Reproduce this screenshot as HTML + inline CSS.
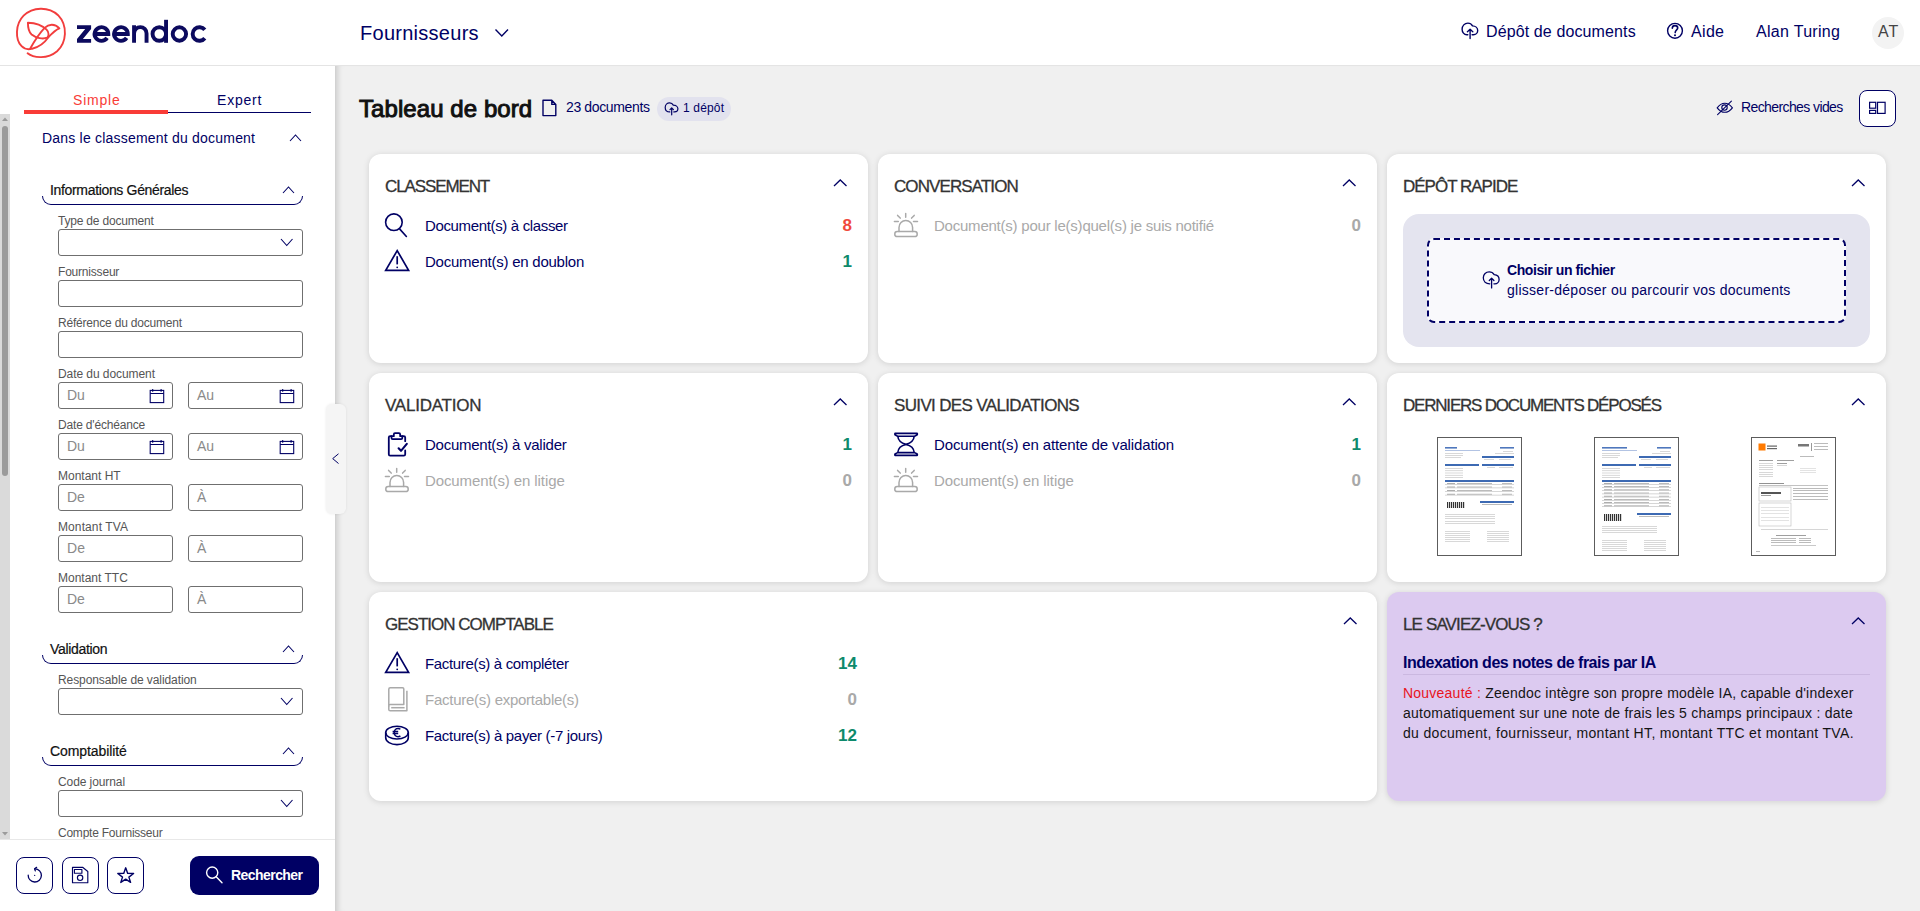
<!DOCTYPE html>
<html><head><meta charset="utf-8"><title>Zeendoc - Tableau de bord</title>
<style>
html,body{margin:0;padding:0;width:1920px;height:911px;overflow:hidden;background:#fff;}
body{position:relative;font-family:"Liberation Sans",sans-serif;}
.t{position:absolute;white-space:nowrap;}
svg{overflow:visible;}
</style></head><body>
<div style="position:absolute;left:0px;top:0px;width:1920px;height:65px;background:#fff;"></div>
<div style="position:absolute;left:0px;top:65px;width:1920px;height:1px;background:#e4e4e4;"></div>
<svg style="position:absolute;left:0px;top:0px;" width="80" height="80" viewBox="0 0 80 80" fill="none"><g transform="translate(0.6,0.7)" stroke="#f23d3d" stroke-width="1.9" stroke-linecap="round" stroke-linejoin="round">
<path d="M27,52.6 C33,57.6 47,58.6 56.5,50.5 C66,42 67.5,25 57.5,14.5 C48,5.5 32,6 23,15 C14.5,23.5 14.5,39 21,45.5 C24,48.5 28,49 31.5,48 C38,46.5 44,42 47.8,36.5"/>
<path d="M29.8,47.6 C33.5,41 38.5,33 44,27.2 C48,23.4 54,22.6 58.8,27.6 C55,29 51.5,32.5 47.8,36.5"/>
<path d="M27.3,22 C33.5,22.2 41.5,24.5 46,29 C48.5,31.5 48.5,35.5 46.5,37 C42.5,38.6 35.5,37.5 31,33.8 C28,31 27.3,26 27.3,22 Z"/>
</g></svg>
<svg style="position:absolute;left:70px;top:10px;" width="150" height="45" viewBox="0 0 150 45" fill="none"><g fill="#0c0a5e"><path d="M7,15.2 H21.1 V19.1 L12.9,28.9 H21.1 V32.8 H7 V28.9 L15.2,19.1 H7 Z"/></g>
<g stroke="#0c0a5e" stroke-width="3.9" fill="none">
<path d="M24.6,24 H38.3 A6.85,6.85 0 1 0 37.1,27.9"/>
<path d="M44.1,24 H57.8 A6.85,6.85 0 1 0 56.6,27.9"/>
<path d="M64.05,32.8 V15.2 M64.05,23.4 A6.25,6.25 0 0 1 76.55,23.4 V32.8"/>
<circle cx="89.3" cy="24" r="6.75"/><path d="M96.05,9.8 V32.8"/>
<circle cx="109.4" cy="24" r="6.7"/>
<path d="M134.8,19.8 A6.8,6.8 0 1 0 134.8,28.2"/>
</g></svg>
<div class="t" id="t1" style="left:360px;top:23px;font-size:20px;line-height:20px;color:#000064;font-weight:400;letter-spacing:0.273px;">Fournisseurs</div>
<svg style="position:absolute;left:490px;top:25px;" width="24" height="16" viewBox="0 0 24 16" fill="none"><path d="M5.5,4.5 L11.8,11 L18,4.5" stroke="#000064" stroke-width="1.4"/></svg>
<svg style="position:absolute;left:1455px;top:15px;" width="30" height="30" viewBox="0 0 30 30" fill="none"><g stroke="#000064" stroke-width="1.4" stroke-linecap="round" stroke-linejoin="round">
<path d="M12.8,19.7 H11.8 C9.1,19.7 7.1,17.2 7.1,14.2 C7.1,10.8 9.6,8.1 12.9,8.1 C15,8.1 16.6,9.2 17.5,10.9 C20.4,11 22.7,13 22.7,15.5 C22.7,17.9 20.8,19.7 18.4,19.7 H17.1"/>
<path d="M15.1,23.5 V14.8 M12.4,16.7 L15.1,14.2 L17.8,16.7"/></g></svg>
<div class="t" id="t2" style="left:1486px;top:24px;font-size:16px;line-height:16px;color:#000064;font-weight:400;letter-spacing:0.118px;">Dépôt de documents</div>
<svg style="position:absolute;left:1660px;top:15px;" width="30" height="30" viewBox="0 0 30 30" fill="none"><circle cx="15" cy="15.8" r="7.4" stroke="#000064" stroke-width="1.4"/>
<path d="M12.3,13.2 C12.3,11.4 13.6,10.6 15,10.6 C16.5,10.6 17.7,11.6 17.7,13 C17.7,14.8 15.2,15 15.2,17.6" stroke="#000064" stroke-width="1.6" stroke-linecap="round"/>
<circle cx="15" cy="20.2" r="1" fill="#000064"/></svg>
<div class="t" id="t3" style="left:1691px;top:24px;font-size:16px;line-height:16px;color:#000064;font-weight:400;letter-spacing:0.333px;">Aide</div>
<div class="t" id="t4" style="left:1756px;top:24px;font-size:16px;line-height:16px;color:#000064;font-weight:400;letter-spacing:0.300px;">Alan Turing</div>
<div style="position:absolute;left:1872px;top:17px;width:32px;height:32px;background:#f3f3f3;border-radius:50%;"></div>
<div class="t" id="t5" style="left:1878px;top:24px;font-size:16px;line-height:16px;color:#444;font-weight:400;letter-spacing:1.000px;">AT</div>
<div style="position:absolute;left:0px;top:66px;width:335px;height:845px;background:#fff;"></div>
<div style="position:absolute;left:24px;top:110px;width:144px;height:4px;background:#f93c37;"></div>
<div style="position:absolute;left:168px;top:112px;width:143px;height:1px;background:#000064;"></div>
<div class="t" id="t6" style="left:73px;top:93px;font-size:14px;line-height:14px;color:#f93c37;font-weight:400;letter-spacing:0.800px;">Simple</div>
<div class="t" id="t7" style="left:217px;top:93px;font-size:14px;line-height:14px;color:#000064;font-weight:400;letter-spacing:0.800px;">Expert</div>
<div style="position:absolute;left:0px;top:114px;width:10px;height:725px;background:#dadada;"></div>
<div style="position:absolute;left:2px;top:126px;width:6px;height:350px;background:#9b9b9b;border-radius:3px;"></div>
<svg style="position:absolute;left:0px;top:114px;" width="10" height="10" viewBox="0 0 10 10" fill="none"><path d="M2,7 L5,3.5 L8,7 Z" fill="#9b9b9b"/></svg>
<svg style="position:absolute;left:0px;top:829px;" width="10" height="10" viewBox="0 0 10 10" fill="none"><path d="M2,3 L5,6.5 L8,3 Z" fill="#9b9b9b"/></svg>
<div class="t" id="t8" style="left:42px;top:131px;font-size:14px;line-height:14px;color:#000064;font-weight:400;letter-spacing:0.207px;">Dans le classement du document</div>
<svg style="position:absolute;left:289px;top:132.6px;" width="13" height="10" viewBox="0 0 13 10" fill="none"><path d="M1,8 L6.5,2 L12,8" stroke="#000064" stroke-width="1.1"/></svg>
<div style="position:absolute;left:42px;top:184px;width:259px;height:20px;border:1px solid #000064;border-top:none;border-bottom-left-radius:9px;border-bottom-right-radius:9px;"></div>
<div style="position:absolute;left:40px;top:183px;width:264px;height:13px;background:#fff;"></div>
<div class="t" id="t9" style="left:50px;top:183px;font-size:14px;line-height:14px;color:#111;font-weight:400;letter-spacing:-0.333px;-webkit-text-stroke:0.2px #111;">Informations Générales</div>
<svg style="position:absolute;left:282px;top:185px;" width="13" height="10" viewBox="0 0 13 10" fill="none"><path d="M1,8 L6.5,2 L12,8" stroke="#000064" stroke-width="1.1"/></svg>
<div class="t" id="t10" style="left:58px;top:215px;font-size:12px;line-height:12px;color:#555;font-weight:400;letter-spacing:-0.200px;">Type de document</div>
<div style="position:absolute;left:58px;top:229px;width:243px;height:25px;border:1px solid #6f6f6f;border-radius:3px;background:#fff;"></div>
<svg style="position:absolute;left:280px;top:236.7px;" width="13.5" height="10.5" viewBox="0 0 13.5 10.5" fill="none"><path d="M1,2 L6.75,8.5 L12.5,2" stroke="#000064" stroke-width="1.1"/></svg>
<div class="t" id="t11" style="left:58px;top:266px;font-size:12px;line-height:12px;color:#555;font-weight:400;letter-spacing:-0.200px;">Fournisseur</div>
<div style="position:absolute;left:58px;top:280px;width:243px;height:25px;border:1px solid #6f6f6f;border-radius:3px;background:#fff;"></div>
<div class="t" id="t12" style="left:58px;top:317px;font-size:12px;line-height:12px;color:#555;font-weight:400;letter-spacing:-0.200px;">Référence du document</div>
<div style="position:absolute;left:58px;top:331px;width:243px;height:25px;border:1px solid #6f6f6f;border-radius:3px;background:#fff;"></div>
<div class="t" id="t13" style="left:58px;top:368px;font-size:12px;line-height:12px;color:#555;font-weight:400;letter-spacing:-0.067px;">Date du document</div>
<div style="position:absolute;left:58px;top:382px;width:113px;height:25px;border:1px solid #6f6f6f;border-radius:3px;background:#fff;"></div>
<div style="position:absolute;left:188px;top:382px;width:113px;height:25px;border:1px solid #6f6f6f;border-radius:3px;background:#fff;"></div>
<svg style="position:absolute;left:149px;top:388px;" width="16" height="16" viewBox="0 0 16 16" fill="none"><g stroke="#000064" stroke-width="1.1"><rect x="1.2" y="2.4" width="13.5" height="12.2"/><path d="M1.2,5.5 H14.7 M3.7,1 V3.8 M12.1,1 V3.8"/></g></svg>
<svg style="position:absolute;left:279px;top:388px;" width="16" height="16" viewBox="0 0 16 16" fill="none"><g stroke="#000064" stroke-width="1.1"><rect x="1.2" y="2.4" width="13.5" height="12.2"/><path d="M1.2,5.5 H14.7 M3.7,1 V3.8 M12.1,1 V3.8"/></g></svg>
<div class="t" id="t14" style="left:67px;top:388px;font-size:14px;line-height:14px;color:#8a8a8a;font-weight:400;letter-spacing:-0.067px;">Du</div>
<div class="t" id="t15" style="left:197px;top:388px;font-size:14px;line-height:14px;color:#8a8a8a;font-weight:400;">Au</div>
<div class="t" id="t16" style="left:58px;top:419px;font-size:12px;line-height:12px;color:#555;font-weight:400;letter-spacing:-0.179px;">Date d'échéance</div>
<div style="position:absolute;left:58px;top:433px;width:113px;height:25px;border:1px solid #6f6f6f;border-radius:3px;background:#fff;"></div>
<div style="position:absolute;left:188px;top:433px;width:113px;height:25px;border:1px solid #6f6f6f;border-radius:3px;background:#fff;"></div>
<svg style="position:absolute;left:149px;top:439px;" width="16" height="16" viewBox="0 0 16 16" fill="none"><g stroke="#000064" stroke-width="1.1"><rect x="1.2" y="2.4" width="13.5" height="12.2"/><path d="M1.2,5.5 H14.7 M3.7,1 V3.8 M12.1,1 V3.8"/></g></svg>
<svg style="position:absolute;left:279px;top:439px;" width="16" height="16" viewBox="0 0 16 16" fill="none"><g stroke="#000064" stroke-width="1.1"><rect x="1.2" y="2.4" width="13.5" height="12.2"/><path d="M1.2,5.5 H14.7 M3.7,1 V3.8 M12.1,1 V3.8"/></g></svg>
<div class="t" id="t17" style="left:67px;top:439px;font-size:14px;line-height:14px;color:#8a8a8a;font-weight:400;letter-spacing:-0.179px;">Du</div>
<div class="t" id="t18" style="left:197px;top:439px;font-size:14px;line-height:14px;color:#8a8a8a;font-weight:400;">Au</div>
<div class="t" id="t19" style="left:58px;top:470px;font-size:12px;line-height:12px;color:#555;font-weight:400;">Montant HT</div>
<div style="position:absolute;left:58px;top:484px;width:113px;height:25px;border:1px solid #6f6f6f;border-radius:3px;background:#fff;"></div>
<div style="position:absolute;left:188px;top:484px;width:113px;height:25px;border:1px solid #6f6f6f;border-radius:3px;background:#fff;"></div>
<div class="t" id="t20" style="left:67px;top:490px;font-size:14px;line-height:14px;color:#8a8a8a;font-weight:400;">De</div>
<div class="t" id="t21" style="left:197px;top:490px;font-size:14px;line-height:14px;color:#8a8a8a;font-weight:400;">À</div>
<div class="t" id="t22" style="left:58px;top:521px;font-size:12px;line-height:12px;color:#555;font-weight:400;letter-spacing:0.100px;">Montant TVA</div>
<div style="position:absolute;left:58px;top:535px;width:113px;height:25px;border:1px solid #6f6f6f;border-radius:3px;background:#fff;"></div>
<div style="position:absolute;left:188px;top:535px;width:113px;height:25px;border:1px solid #6f6f6f;border-radius:3px;background:#fff;"></div>
<div class="t" id="t23" style="left:67px;top:541px;font-size:14px;line-height:14px;color:#8a8a8a;font-weight:400;letter-spacing:0.100px;">De</div>
<div class="t" id="t24" style="left:197px;top:541px;font-size:14px;line-height:14px;color:#8a8a8a;font-weight:400;">À</div>
<div class="t" id="t25" style="left:58px;top:572px;font-size:12px;line-height:12px;color:#555;font-weight:400;">Montant TTC</div>
<div style="position:absolute;left:58px;top:586px;width:113px;height:25px;border:1px solid #6f6f6f;border-radius:3px;background:#fff;"></div>
<div style="position:absolute;left:188px;top:586px;width:113px;height:25px;border:1px solid #6f6f6f;border-radius:3px;background:#fff;"></div>
<div class="t" id="t26" style="left:67px;top:592px;font-size:14px;line-height:14px;color:#8a8a8a;font-weight:400;">De</div>
<div class="t" id="t27" style="left:197px;top:592px;font-size:14px;line-height:14px;color:#8a8a8a;font-weight:400;">À</div>
<div style="position:absolute;left:42px;top:643px;width:259px;height:20px;border:1px solid #000064;border-top:none;border-bottom-left-radius:9px;border-bottom-right-radius:9px;"></div>
<div style="position:absolute;left:40px;top:642px;width:264px;height:13px;background:#fff;"></div>
<div class="t" id="t28" style="left:50px;top:642px;font-size:14px;line-height:14px;color:#111;font-weight:400;letter-spacing:-0.333px;-webkit-text-stroke:0.2px #111;">Validation</div>
<svg style="position:absolute;left:282px;top:644px;" width="13" height="10" viewBox="0 0 13 10" fill="none"><path d="M1,8 L6.5,2 L12,8" stroke="#000064" stroke-width="1.1"/></svg>
<div class="t" id="t29" style="left:58px;top:674px;font-size:12px;line-height:12px;color:#555;font-weight:400;letter-spacing:-0.083px;">Responsable de validation</div>
<div style="position:absolute;left:58px;top:688px;width:243px;height:25px;border:1px solid #6f6f6f;border-radius:3px;background:#fff;"></div>
<svg style="position:absolute;left:280px;top:695.7px;" width="13.5" height="10.5" viewBox="0 0 13.5 10.5" fill="none"><path d="M1,2 L6.75,8.5 L12.5,2" stroke="#000064" stroke-width="1.1"/></svg>
<div style="position:absolute;left:42px;top:745px;width:259px;height:20px;border:1px solid #000064;border-top:none;border-bottom-left-radius:9px;border-bottom-right-radius:9px;"></div>
<div style="position:absolute;left:40px;top:744px;width:264px;height:13px;background:#fff;"></div>
<div class="t" id="t30" style="left:50px;top:744px;font-size:14px;line-height:14px;color:#111;font-weight:400;letter-spacing:-0.091px;-webkit-text-stroke:0.2px #111;">Comptabilité</div>
<svg style="position:absolute;left:282px;top:746px;" width="13" height="10" viewBox="0 0 13 10" fill="none"><path d="M1,8 L6.5,2 L12,8" stroke="#000064" stroke-width="1.1"/></svg>
<div class="t" id="t31" style="left:58px;top:776px;font-size:12px;line-height:12px;color:#555;font-weight:400;letter-spacing:-0.091px;">Code journal</div>
<div style="position:absolute;left:58px;top:790px;width:243px;height:25px;border:1px solid #6f6f6f;border-radius:3px;background:#fff;"></div>
<svg style="position:absolute;left:280px;top:797.7px;" width="13.5" height="10.5" viewBox="0 0 13.5 10.5" fill="none"><path d="M1,2 L6.75,8.5 L12.5,2" stroke="#000064" stroke-width="1.1"/></svg>
<div class="t" id="t32" style="left:58px;top:827px;font-size:12px;line-height:12px;color:#555;font-weight:400;letter-spacing:-0.235px;">Compte Fournisseur</div>
<div style="position:absolute;left:0px;top:839px;width:335px;height:72px;background:#fff;"></div>
<div style="position:absolute;left:0px;top:839px;width:335px;height:1px;background:#e8e8e8;"></div>
<div style="position:absolute;left:16px;top:857px;width:35px;height:35px;border:1px solid #000064;border-radius:8px;background:#fff;"></div>
<div style="position:absolute;left:62px;top:857px;width:35px;height:35px;border:1px solid #000064;border-radius:8px;background:#fff;"></div>
<div style="position:absolute;left:107px;top:857px;width:35px;height:35px;border:1px solid #000064;border-radius:8px;background:#fff;"></div>
<svg style="position:absolute;left:20px;top:855px;" width="40" height="40" viewBox="0 0 40 40" fill="none"><g stroke="#000064" stroke-width="1.3" stroke-linecap="round" stroke-linejoin="round">
<path d="M8.2,20.2 A6.6,6.6 0 1 0 15,13.8"/><path d="M16.6,12.4 L14.6,13.8 L15.3,15.9"/></g><circle cx="14.7" cy="20.4" r="0.6" fill="#000064"/></svg>
<svg style="position:absolute;left:62px;top:855px;" width="40" height="40" viewBox="0 0 40 40" fill="none"><g stroke="#000064" stroke-width="1.15" stroke-linejoin="round">
<path d="M10.5,12.3 H20.6 L25.8,16.5 V27.7 H10.5 Z"/><rect x="12.4" y="14.5" width="7.5" height="3.7"/><circle cx="18.1" cy="22.8" r="2.7"/></g></svg>
<svg style="position:absolute;left:100px;top:855px;" width="50" height="40" viewBox="0 0 50 40" fill="none"><path d="M25.7,12.8 L27.7,18.4 L33.6,18.5 L28.9,22.1 L30.6,27.4 L25.7,24.2 L20.8,27.4 L22.5,22.1 L17.8,18.5 L23.7,18.4 Z" stroke="#000064" stroke-width="1.4" stroke-linejoin="round"/></svg>
<div style="position:absolute;left:190px;top:856px;width:129px;height:39px;background:#000064;border-radius:9px;"></div>
<svg style="position:absolute;left:200px;top:860px;" width="30" height="30" viewBox="0 0 30 30" fill="none"><g stroke="#fff" stroke-width="1.4" stroke-linecap="round"><circle cx="12.2" cy="12.6" r="5.6"/><path d="M16.2,16.8 L22,22.8"/></g></svg>
<div class="t" id="t33" style="left:231px;top:868px;font-size:14px;line-height:14px;color:#fff;font-weight:700;letter-spacing:-0.556px;">Rechercher</div>
<div style="position:absolute;left:335px;top:66px;width:1585px;height:845px;background:#f0f0f0;box-shadow:inset 7px 0 6px -5px rgba(0,0,0,0.18);"></div>
<div style="position:absolute;left:326px;top:404px;width:20px;height:110px;background:#f5f5f5;border-radius:6px;box-shadow:0 0 3px rgba(0,0,0,0.08);"></div>
<svg style="position:absolute;left:328px;top:450px;" width="14" height="18" viewBox="0 0 14 18" fill="none"><path d="M10.5,3.8 L4.7,8.6 L10.5,13.5" stroke="#000064" stroke-width="1"/></svg>
<div class="t" id="t34" style="left:359px;top:97px;font-size:24px;line-height:24px;color:#111;font-weight:400;letter-spacing:0.071px;-webkit-text-stroke:1px #111;">Tableau de bord</div>
<svg style="position:absolute;left:535px;top:93px;" width="30" height="30" viewBox="0 0 30 30" fill="none"><path d="M8,7.3 H16.8 L20.8,11.6 V22.6 H8 Z M16.8,7.3 V11.4 H20.8" stroke="#000064" stroke-width="1.4" stroke-linejoin="round"/></svg>
<div class="t" id="t35" style="left:566px;top:100px;font-size:14px;line-height:14px;color:#000064;font-weight:400;letter-spacing:-0.364px;">23 documents</div>
<div style="position:absolute;left:657px;top:97px;width:74px;height:24px;background:#e2e2ee;border-radius:12px;"></div>
<svg style="position:absolute;left:655px;top:95px;" width="30" height="25" viewBox="0 0 30 25" fill="none"><g stroke="#000064" stroke-width="1.2" stroke-linecap="round" stroke-linejoin="round">
<path d="M14.8,16.9 C12,16.9 10.2,15 10.2,12.4 C10.2,9.9 12.2,7.9 14.7,7.9 C16.3,7.9 17.6,8.8 18.3,10.1 C20.8,10.2 22.9,11.8 22.9,13.8 C22.9,15.6 21.4,16.9 19.6,16.9 H18.8"/>
<path d="M16.7,19.8 V13 M15,14.6 L16.7,12.8 L18.4,14.6"/></g></svg>
<div class="t" id="t36" style="left:683px;top:102px;font-size:12px;line-height:12px;color:#000064;font-weight:400;letter-spacing:0.167px;">1 dépôt</div>
<svg style="position:absolute;left:1710px;top:92px;" width="30" height="30" viewBox="0 0 30 30" fill="none"><g stroke="#000064" stroke-width="1.1" stroke-linecap="round">
<path d="M7.2,15.8 C9.6,12.6 12.2,11.3 14.8,11.3 C17.4,11.3 20,12.6 22.4,15.8 C20,19 17.4,20.3 14.8,20.3 C12.2,20.3 9.6,19 7.2,15.8 Z"/>
<circle cx="14.5" cy="15.6" r="2.7"/><path d="M7.6,22.6 L21.4,9.2"/></g></svg>
<div class="t" id="t37" style="left:1741px;top:100px;font-size:14px;line-height:14px;color:#000064;font-weight:400;letter-spacing:-0.600px;">Recherches vides</div>
<div style="position:absolute;left:1859px;top:90px;width:35px;height:35px;border:1.4px solid #000064;border-radius:8px;background:#fff;"></div>
<svg style="position:absolute;left:1855px;top:85px;" width="45" height="45" viewBox="0 0 45 45" fill="none"><g stroke="#000064" stroke-width="1.2"><rect x="14.6" y="17.3" width="6.1" height="5.9"/><rect x="14.6" y="25.4" width="6.1" height="3"/><rect x="22.5" y="17.3" width="7.6" height="11.1"/></g></svg>
<div style="position:absolute;left:369px;top:154px;width:499px;height:209px;background:#fff;border-radius:12px;box-shadow:0 1px 6px rgba(0,0,0,0.13);"></div>
<div class="t" id="t38" style="left:385px;top:178px;font-size:17px;line-height:17px;color:#333333;font-weight:400;letter-spacing:-1.111px;-webkit-text-stroke:0.3px #333;">CLASSEMENT</div>
<svg style="position:absolute;left:833px;top:178px;" width="14.5" height="10" viewBox="0 0 14.5 10" fill="none"><path d="M1,8 L7.25,2 L13.5,8" stroke="#000064" stroke-width="1.3"/></svg>
<svg style="position:absolute;left:380px;top:208px;" width="35" height="35" viewBox="0 0 35 35" fill="none"><g stroke="#000064" stroke-width="1.6" stroke-linecap="round"><circle cx="13.9" cy="14.2" r="8.3"/><path d="M19.8,21.1 L26.4,28.5"/></g></svg>
<div class="t" id="t39" style="left:425px;top:218px;font-size:15px;line-height:15px;color:#000064;font-weight:400;letter-spacing:-0.350px;">Document(s) à classer</div>
<div class="t" id="t40" style="left:792px;width:60px;text-align:right;top:217px;font-size:17px;line-height:17px;color:#f04a3c;font-weight:700;">8</div>
<svg style="position:absolute;left:380px;top:244px;" width="35" height="35" viewBox="0 0 35 35" fill="none"><g stroke="#000064" stroke-width="1.7" stroke-linejoin="miter"><path d="M17.2,6.6 L28.6,26.3 H5.7 Z"/><path d="M17.2,12.2 V20.4"/></g><circle cx="17.2" cy="23.3" r="0.9" fill="#000064"/></svg>
<div class="t" id="t41" style="left:425px;top:254px;font-size:15px;line-height:15px;color:#000064;font-weight:400;letter-spacing:-0.238px;">Document(s) en doublon</div>
<div class="t" id="t42" style="left:792px;width:60px;text-align:right;top:253px;font-size:17px;line-height:17px;color:#0e8a6c;font-weight:700;">1</div>
<div style="position:absolute;left:878px;top:154px;width:499px;height:209px;background:#fff;border-radius:12px;box-shadow:0 1px 6px rgba(0,0,0,0.13);"></div>
<div class="t" id="t43" style="left:894px;top:178px;font-size:17px;line-height:17px;color:#333333;font-weight:400;letter-spacing:-0.909px;-webkit-text-stroke:0.3px #333;">CONVERSATION</div>
<svg style="position:absolute;left:1342px;top:178px;" width="14.5" height="10" viewBox="0 0 14.5 10" fill="none"><path d="M1,8 L7.25,2 L13.5,8" stroke="#000064" stroke-width="1.3"/></svg>
<svg style="position:absolute;left:888px;top:208px;" width="35" height="35" viewBox="0 0 35 35" fill="none"><g stroke="#a9a9a9" stroke-width="1.5" stroke-linecap="round">
<path d="M11,23.4 V19.4 A6.8,6.8 0 0 1 24.6,19.4 V23.4"/><rect x="6.8" y="23.6" width="22.4" height="5" rx="2.4"/>
<path d="M17.7,5.4 V9.3 M9.6,7.4 L12.2,10.1 M26.2,7.4 L23.6,10.1 M6.4,13.6 H10.3 M25.5,13.6 H29.5"/></g></svg>
<div class="t" id="t44" style="left:934px;top:218px;font-size:15px;line-height:15px;color:#a9a9a9;font-weight:400;letter-spacing:-0.227px;">Document(s) pour le(s)quel(s) je suis notifié</div>
<div class="t" id="t45" style="left:1301px;width:60px;text-align:right;top:217px;font-size:17px;line-height:17px;color:#a9a9a9;font-weight:700;">0</div>
<div style="position:absolute;left:1387px;top:154px;width:499px;height:209px;background:#fff;border-radius:12px;box-shadow:0 1px 6px rgba(0,0,0,0.13);"></div>
<div class="t" id="t46" style="left:1403px;top:178px;font-size:17px;line-height:17px;color:#333333;font-weight:400;letter-spacing:-1.000px;-webkit-text-stroke:0.3px #333;">DÉPÔT RAPIDE</div>
<svg style="position:absolute;left:1851px;top:178px;" width="14.5" height="10" viewBox="0 0 14.5 10" fill="none"><path d="M1,8 L7.25,2 L13.5,8" stroke="#000064" stroke-width="1.3"/></svg>
<div style="position:absolute;left:1403px;top:214px;width:467px;height:133px;background:#e4e4ef;border-radius:16px;"></div>
<div style="position:absolute;left:1427px;top:238px;width:419px;height:85px;background:#f9f9fc;border:2px dashed #000064;border-radius:7px;box-sizing:border-box;"></div>
<svg style="position:absolute;left:1475px;top:260px;" width="30" height="30" viewBox="0 0 30 30" fill="none"><g stroke="#000064" stroke-width="1.3" stroke-linecap="round" stroke-linejoin="round">
<path d="M14.8,23.8 C11,23.8 8.3,21.4 8.3,17.8 C8.3,14.4 11,11.9 14.2,11.9 C16.4,11.9 18.2,13 19.2,14.6 C22,14.8 24.1,16.8 24.1,19.4 C24.1,21.8 22.3,23.8 19.8,23.8 H18.9"/>
<path d="M16.6,27.9 V18.4 M14.3,20.5 L16.6,18.1 L18.9,20.5"/></g></svg>
<div class="t" id="t47" style="left:1507px;top:263px;font-size:14px;line-height:14px;color:#000064;font-weight:700;letter-spacing:-0.412px;">Choisir un fichier</div>
<div class="t" id="t48" style="left:1507px;top:283px;font-size:14px;line-height:14px;color:#000064;font-weight:400;letter-spacing:0.268px;">glisser-déposer ou parcourir vos documents</div>
<div style="position:absolute;left:369px;top:373px;width:499px;height:209px;background:#fff;border-radius:12px;box-shadow:0 1px 6px rgba(0,0,0,0.13);"></div>
<div class="t" id="t49" style="left:385px;top:397px;font-size:17px;line-height:17px;color:#333333;font-weight:400;letter-spacing:-0.222px;-webkit-text-stroke:0.3px #333;">VALIDATION</div>
<svg style="position:absolute;left:833px;top:397px;" width="14.5" height="10" viewBox="0 0 14.5 10" fill="none"><path d="M1,8 L7.25,2 L13.5,8" stroke="#000064" stroke-width="1.3"/></svg>
<svg style="position:absolute;left:380px;top:427px;" width="35" height="35" viewBox="0 0 35 35" fill="none"><g stroke="#000064" stroke-width="1.8" stroke-linecap="round" stroke-linejoin="round">
<path d="M25.2,14.2 V10.6 C25.2,9.8 24.6,9.2 23.8,9.2 H22.3 M11.5,9.2 H10.2 C9.4,9.2 8.8,9.8 8.8,10.6 V27.3 C8.8,28.1 9.4,28.7 10.2,28.7 H23.8 C24.6,28.7 25.2,28.1 25.2,27.3 V23.4"/>
<path d="M11.5,9.2 V11 C11.5,11.7 12,12.2 12.7,12.2 H21.1 C21.8,12.2 22.3,11.7 22.3,11 V9.2 H20.2 V7.5 C20.2,6.8 19.6,6.2 18.9,6.2 H15 C14.3,6.2 13.8,6.8 13.8,7.5 V9.2 Z"/>
<path d="M18.6,21.3 L21,23.8 L26.8,16.8" stroke-width="2.1"/></g></svg>
<div class="t" id="t50" style="left:425px;top:437px;font-size:15px;line-height:15px;color:#000064;font-weight:400;letter-spacing:-0.250px;">Document(s) à valider</div>
<div class="t" id="t51" style="left:792px;width:60px;text-align:right;top:436px;font-size:17px;line-height:17px;color:#0e8a6c;font-weight:700;">1</div>
<svg style="position:absolute;left:379px;top:463px;" width="35" height="35" viewBox="0 0 35 35" fill="none"><g stroke="#a9a9a9" stroke-width="1.5" stroke-linecap="round">
<path d="M11,23.4 V19.4 A6.8,6.8 0 0 1 24.6,19.4 V23.4"/><rect x="6.8" y="23.6" width="22.4" height="5" rx="2.4"/>
<path d="M17.7,5.4 V9.3 M9.6,7.4 L12.2,10.1 M26.2,7.4 L23.6,10.1 M6.4,13.6 H10.3 M25.5,13.6 H29.5"/></g></svg>
<div class="t" id="t52" style="left:425px;top:473px;font-size:15px;line-height:15px;color:#a9a9a9;font-weight:400;letter-spacing:-0.100px;">Document(s) en litige</div>
<div class="t" id="t53" style="left:792px;width:60px;text-align:right;top:472px;font-size:17px;line-height:17px;color:#a9a9a9;font-weight:700;">0</div>
<div style="position:absolute;left:878px;top:373px;width:499px;height:209px;background:#fff;border-radius:12px;box-shadow:0 1px 6px rgba(0,0,0,0.13);"></div>
<div class="t" id="t54" style="left:894px;top:397px;font-size:17px;line-height:17px;color:#333333;font-weight:400;letter-spacing:-0.650px;-webkit-text-stroke:0.3px #333;">SUIVI DES VALIDATIONS</div>
<svg style="position:absolute;left:1342px;top:397px;" width="14.5" height="10" viewBox="0 0 14.5 10" fill="none"><path d="M1,8 L7.25,2 L13.5,8" stroke="#000064" stroke-width="1.3"/></svg>
<svg style="position:absolute;left:888px;top:427px;" width="35" height="35" viewBox="0 0 35 35" fill="none"><g stroke="#000064" stroke-width="1.6" stroke-linejoin="round">
<path d="M7.2,6.4 H29 C29.4,6.4 29.5,7.4 29.2,7.8 L26.6,9.2 H9.6 L7,7.8 C6.7,7.4 6.8,6.4 7.2,6.4 Z"/>
<path d="M9.6,25.6 H26.6 L29.2,27 C29.5,27.4 29.4,28.4 29,28.4 H7.2 C6.8,28.4 6.7,27.4 7,27 Z"/>
<path d="M9.8,9.3 C10.2,14.5 14.8,16.5 18,17.3 C21.2,16.5 25.8,14.5 26.2,9.3 M9.8,25.5 C10.2,20.3 14.8,18.2 18,17.5 C21.2,18.2 25.8,20.3 26.2,25.5"/></g></svg>
<div class="t" id="t55" style="left:934px;top:437px;font-size:15px;line-height:15px;color:#000064;font-weight:400;letter-spacing:-0.143px;">Document(s) en attente de validation</div>
<div class="t" id="t56" style="left:1301px;width:60px;text-align:right;top:436px;font-size:17px;line-height:17px;color:#0e8a6c;font-weight:700;">1</div>
<svg style="position:absolute;left:888px;top:463px;" width="35" height="35" viewBox="0 0 35 35" fill="none"><g stroke="#a9a9a9" stroke-width="1.5" stroke-linecap="round">
<path d="M11,23.4 V19.4 A6.8,6.8 0 0 1 24.6,19.4 V23.4"/><rect x="6.8" y="23.6" width="22.4" height="5" rx="2.4"/>
<path d="M17.7,5.4 V9.3 M9.6,7.4 L12.2,10.1 M26.2,7.4 L23.6,10.1 M6.4,13.6 H10.3 M25.5,13.6 H29.5"/></g></svg>
<div class="t" id="t57" style="left:934px;top:473px;font-size:15px;line-height:15px;color:#a9a9a9;font-weight:400;letter-spacing:-0.100px;">Document(s) en litige</div>
<div class="t" id="t58" style="left:1301px;width:60px;text-align:right;top:472px;font-size:17px;line-height:17px;color:#a9a9a9;font-weight:700;">0</div>
<div style="position:absolute;left:1387px;top:373px;width:499px;height:209px;background:#fff;border-radius:12px;box-shadow:0 1px 6px rgba(0,0,0,0.13);"></div>
<div class="t" id="t59" style="left:1403px;top:397px;font-size:17px;line-height:17px;color:#333333;font-weight:400;letter-spacing:-1.200px;-webkit-text-stroke:0.3px #333;">DERNIERS DOCUMENTS DÉPOSÉS</div>
<svg style="position:absolute;left:1851px;top:397px;" width="14.5" height="10" viewBox="0 0 14.5 10" fill="none"><path d="M1,8 L7.25,2 L13.5,8" stroke="#000064" stroke-width="1.3"/></svg>
<svg style="position:absolute;left:1437px;top:437px;" width="85" height="119" viewBox="0 0 85 119" fill="none"><rect x="0.5" y="0.5" width="84" height="118" fill="#fff" stroke="#5c5c5c" stroke-width="1"/><defs><filter id="bl0" x="-5%" y="-5%" width="110%" height="110%"><feGaussianBlur stdDeviation="0.45"/></filter></defs><g filter="url(#bl0)"><rect x="8" y="10" width="12" height="1.6" fill="#4f77bd"/><rect x="63" y="10" width="14" height="1.6" fill="#4f77bd"/><rect x="8" y="13" width="35" height="0.8" fill="#9fb5dc"/><rect x="8" y="16" width="18" height="0.8" fill="#cfcfcf"/><rect x="8" y="18" width="18" height="0.8" fill="#cfcfcf"/><rect x="8" y="20" width="16" height="0.8" fill="#cfcfcf"/><rect x="66" y="14" width="10" height="0.8" fill="#cfcfcf"/><rect x="58" y="16" width="19" height="0.8" fill="#cfcfcf"/><rect x="45" y="19" width="32" height="2" fill="#3d6bb3"/><rect x="47" y="22" width="10" height="0.8" fill="#cfcfcf"/><rect x="62" y="22" width="12" height="0.8" fill="#cfcfcf"/><rect x="8" y="27" width="34" height="2" fill="#3d6bb3"/><rect x="45" y="27" width="32" height="2" fill="#3d6bb3"/><rect x="8" y="31.0" width="18" height="0.8" fill="#cfcfcf"/><rect x="8" y="33.3" width="18" height="0.8" fill="#cfcfcf"/><rect x="8" y="35.6" width="18" height="0.8" fill="#cfcfcf"/><rect x="8" y="37.9" width="18" height="0.8" fill="#cfcfcf"/><rect x="8" y="40.2" width="18" height="0.8" fill="#cfcfcf"/><rect x="50" y="30" width="8" height="0.8" fill="#cfcfcf"/><rect x="62" y="30" width="14" height="0.8" fill="#cfcfcf"/><rect x="8" y="43" width="69" height="2" fill="#3d6bb3"/><rect x="8" y="47.0" width="69" height="0.6" fill="#bbbbbb"/><rect x="10" y="46.0" width="8" height="0.8" fill="#999"/><rect x="20" y="46.0" width="35" height="0.8" fill="#aaa"/><rect x="65" y="46.0" width="10" height="0.8" fill="#aaa"/><rect x="8" y="50.6" width="69" height="0.6" fill="#bbbbbb"/><rect x="10" y="49.6" width="8" height="0.8" fill="#999"/><rect x="20" y="49.6" width="35" height="0.8" fill="#aaa"/><rect x="65" y="49.6" width="10" height="0.8" fill="#aaa"/><rect x="8" y="54.2" width="69" height="0.6" fill="#bbbbbb"/><rect x="10" y="53.2" width="8" height="0.8" fill="#999"/><rect x="20" y="53.2" width="35" height="0.8" fill="#aaa"/><rect x="65" y="53.2" width="10" height="0.8" fill="#aaa"/><rect x="8" y="57.8" width="69" height="0.6" fill="#bbbbbb"/><rect x="10" y="56.8" width="8" height="0.8" fill="#999"/><rect x="20" y="56.8" width="35" height="0.8" fill="#aaa"/><rect x="65" y="56.8" width="10" height="0.8" fill="#aaa"/><rect x="43" y="64" width="34" height="2" fill="#3d6bb3"/><rect x="45" y="67" width="30" height="0.8" fill="#aaa"/><rect x="10" y="65" width="1.2" height="6" fill="#333"/><rect x="12" y="65" width="1.2" height="6" fill="#333"/><rect x="14" y="65" width="1.2" height="6" fill="#333"/><rect x="16" y="65" width="1.2" height="6" fill="#333"/><rect x="18" y="65" width="1.2" height="6" fill="#333"/><rect x="20" y="65" width="1.2" height="6" fill="#333"/><rect x="22" y="65" width="1.2" height="6" fill="#333"/><rect x="24" y="65" width="1.2" height="6" fill="#333"/><rect x="26" y="65" width="1.2" height="6" fill="#333"/><rect x="8" y="77" width="50" height="0.8" fill="#cfcfcf"/><rect x="8" y="79" width="50" height="0.8" fill="#cfcfcf"/><rect x="8" y="81" width="50" height="0.8" fill="#cfcfcf"/><rect x="8" y="84" width="50" height="0.8" fill="#cfcfcf"/><rect x="8" y="86" width="50" height="0.8" fill="#cfcfcf"/><rect x="8" y="94" width="25" height="0.8" fill="#cfcfcf"/><rect x="50" y="94" width="22" height="0.8" fill="#cfcfcf"/><rect x="8" y="96" width="25" height="0.8" fill="#cfcfcf"/><rect x="50" y="96" width="22" height="0.8" fill="#cfcfcf"/><rect x="8" y="98" width="25" height="0.8" fill="#cfcfcf"/><rect x="50" y="98" width="22" height="0.8" fill="#cfcfcf"/><rect x="8" y="100" width="25" height="0.8" fill="#cfcfcf"/><rect x="50" y="100" width="22" height="0.8" fill="#cfcfcf"/><rect x="8" y="102" width="25" height="0.8" fill="#cfcfcf"/><rect x="50" y="102" width="22" height="0.8" fill="#cfcfcf"/><rect x="8" y="104" width="25" height="0.8" fill="#cfcfcf"/><rect x="50" y="104" width="22" height="0.8" fill="#cfcfcf"/></g></svg>
<svg style="position:absolute;left:1594px;top:437px;" width="85" height="119" viewBox="0 0 85 119" fill="none"><rect x="0.5" y="0.5" width="84" height="118" fill="#fff" stroke="#5c5c5c" stroke-width="1"/><defs><filter id="bl1" x="-5%" y="-5%" width="110%" height="110%"><feGaussianBlur stdDeviation="0.45"/></filter></defs><g filter="url(#bl1)"><rect x="8" y="10" width="25" height="1.6" fill="#4f77bd"/><rect x="63" y="10" width="14" height="1.6" fill="#4f77bd"/><rect x="8" y="13" width="35" height="0.8" fill="#9fb5dc"/><rect x="8" y="16" width="18" height="0.8" fill="#cfcfcf"/><rect x="8" y="18" width="18" height="0.8" fill="#cfcfcf"/><rect x="8" y="20" width="16" height="0.8" fill="#cfcfcf"/><rect x="66" y="14" width="10" height="0.8" fill="#cfcfcf"/><rect x="58" y="16" width="19" height="0.8" fill="#cfcfcf"/><rect x="45" y="19" width="32" height="2" fill="#3d6bb3"/><rect x="47" y="22" width="10" height="0.8" fill="#cfcfcf"/><rect x="62" y="22" width="12" height="0.8" fill="#cfcfcf"/><rect x="8" y="27" width="34" height="2" fill="#3d6bb3"/><rect x="45" y="27" width="32" height="2" fill="#3d6bb3"/><rect x="8" y="31.0" width="18" height="0.8" fill="#cfcfcf"/><rect x="8" y="33.3" width="18" height="0.8" fill="#cfcfcf"/><rect x="8" y="35.6" width="18" height="0.8" fill="#cfcfcf"/><rect x="8" y="37.9" width="18" height="0.8" fill="#cfcfcf"/><rect x="8" y="40.2" width="18" height="0.8" fill="#cfcfcf"/><rect x="50" y="30" width="8" height="0.8" fill="#cfcfcf"/><rect x="62" y="30" width="14" height="0.8" fill="#cfcfcf"/><rect x="8" y="43" width="69" height="2" fill="#3d6bb3"/><rect x="8" y="47.0" width="69" height="0.6" fill="#bbbbbb"/><rect x="10" y="46.0" width="8" height="0.8" fill="#999"/><rect x="20" y="46.0" width="35" height="0.8" fill="#aaa"/><rect x="65" y="46.0" width="10" height="0.8" fill="#aaa"/><rect x="8" y="50.2" width="69" height="0.6" fill="#bbbbbb"/><rect x="10" y="49.2" width="8" height="0.8" fill="#999"/><rect x="20" y="49.2" width="35" height="0.8" fill="#aaa"/><rect x="65" y="49.2" width="10" height="0.8" fill="#aaa"/><rect x="8" y="53.4" width="69" height="0.6" fill="#bbbbbb"/><rect x="10" y="52.4" width="8" height="0.8" fill="#999"/><rect x="20" y="52.4" width="35" height="0.8" fill="#aaa"/><rect x="65" y="52.4" width="10" height="0.8" fill="#aaa"/><rect x="8" y="56.6" width="69" height="0.6" fill="#bbbbbb"/><rect x="10" y="55.6" width="8" height="0.8" fill="#999"/><rect x="20" y="55.6" width="35" height="0.8" fill="#aaa"/><rect x="65" y="55.6" width="10" height="0.8" fill="#aaa"/><rect x="8" y="59.8" width="69" height="0.6" fill="#bbbbbb"/><rect x="10" y="58.8" width="8" height="0.8" fill="#999"/><rect x="20" y="58.8" width="35" height="0.8" fill="#aaa"/><rect x="65" y="58.8" width="10" height="0.8" fill="#aaa"/><rect x="8" y="63.0" width="69" height="0.6" fill="#bbbbbb"/><rect x="10" y="62.0" width="8" height="0.8" fill="#999"/><rect x="20" y="62.0" width="35" height="0.8" fill="#aaa"/><rect x="65" y="62.0" width="10" height="0.8" fill="#aaa"/><rect x="8" y="66.2" width="69" height="0.6" fill="#bbbbbb"/><rect x="10" y="65.2" width="8" height="0.8" fill="#999"/><rect x="20" y="65.2" width="35" height="0.8" fill="#aaa"/><rect x="65" y="65.2" width="10" height="0.8" fill="#aaa"/><rect x="8" y="69.4" width="69" height="0.6" fill="#bbbbbb"/><rect x="10" y="68.4" width="8" height="0.8" fill="#999"/><rect x="20" y="68.4" width="35" height="0.8" fill="#aaa"/><rect x="65" y="68.4" width="10" height="0.8" fill="#aaa"/><rect x="43" y="76" width="34" height="2" fill="#3d6bb3"/><rect x="45" y="79" width="30" height="0.8" fill="#aaa"/><rect x="10" y="77" width="1.2" height="7" fill="#333"/><rect x="12" y="77" width="1.2" height="7" fill="#333"/><rect x="14" y="77" width="1.2" height="7" fill="#333"/><rect x="16" y="77" width="1.2" height="7" fill="#333"/><rect x="18" y="77" width="1.2" height="7" fill="#333"/><rect x="20" y="77" width="1.2" height="7" fill="#333"/><rect x="22" y="77" width="1.2" height="7" fill="#333"/><rect x="24" y="77" width="1.2" height="7" fill="#333"/><rect x="26" y="77" width="1.2" height="7" fill="#333"/><rect x="8" y="89" width="55" height="0.8" fill="#cfcfcf"/><rect x="8" y="91" width="55" height="0.8" fill="#cfcfcf"/><rect x="8" y="93" width="55" height="0.8" fill="#cfcfcf"/><rect x="8" y="95" width="55" height="0.8" fill="#cfcfcf"/><rect x="8" y="103" width="25" height="0.8" fill="#cfcfcf"/><rect x="50" y="103" width="22" height="0.8" fill="#cfcfcf"/><rect x="8" y="105" width="25" height="0.8" fill="#cfcfcf"/><rect x="50" y="105" width="22" height="0.8" fill="#cfcfcf"/><rect x="8" y="107" width="25" height="0.8" fill="#cfcfcf"/><rect x="50" y="107" width="22" height="0.8" fill="#cfcfcf"/><rect x="8" y="109" width="25" height="0.8" fill="#cfcfcf"/><rect x="50" y="109" width="22" height="0.8" fill="#cfcfcf"/><rect x="8" y="111" width="25" height="0.8" fill="#cfcfcf"/><rect x="50" y="111" width="22" height="0.8" fill="#cfcfcf"/><rect x="8" y="113" width="25" height="0.8" fill="#cfcfcf"/><rect x="50" y="113" width="22" height="0.8" fill="#cfcfcf"/></g></svg>
<svg style="position:absolute;left:1751px;top:437px;" width="85" height="119" viewBox="0 0 85 119" fill="none"><rect x="0.5" y="0.5" width="84" height="118" fill="#fff" stroke="#5c5c5c" stroke-width="1"/><defs><filter id="bl2" x="-5%" y="-5%" width="110%" height="110%"><feGaussianBlur stdDeviation="0.45"/></filter></defs><g filter="url(#bl2)"><rect x="7.5" y="6.5" width="7" height="7" fill="#ff7a00"/><rect x="16" y="8.5" width="10" height="1.2" fill="#666"/><rect x="16" y="11" width="10" height="1.2" fill="#666"/><rect x="47" y="7" width="11" height="2.5" fill="#777"/><rect x="60" y="6" width="1" height="8" fill="#999"/><rect x="63" y="6" width="14" height="0.8" fill="#aaa"/><rect x="63" y="9" width="14" height="0.8" fill="#aaa"/><rect x="63" y="12" width="14" height="0.8" fill="#aaa"/><rect x="49" y="19" width="14" height="0.8" fill="#aaa"/><rect x="8" y="23" width="14" height="0.8" fill="#888"/><rect x="26" y="23" width="17" height="0.8" fill="#888"/><rect x="8" y="26" width="14" height="0.8" fill="#cfcfcf"/><rect x="8" y="28" width="14" height="0.8" fill="#cfcfcf"/><rect x="8" y="30" width="14" height="0.8" fill="#cfcfcf"/><rect x="8" y="32" width="14" height="0.8" fill="#cfcfcf"/><rect x="8" y="35" width="14" height="0.8" fill="#cfcfcf"/><rect x="8" y="37" width="14" height="0.8" fill="#cfcfcf"/><rect x="8" y="39" width="14" height="0.8" fill="#cfcfcf"/><rect x="26" y="26" width="10" height="0.8" fill="#888"/><rect x="26" y="28" width="10" height="0.8" fill="#cfcfcf"/><rect x="49" y="31" width="16" height="0.8" fill="#ddd"/><rect x="49" y="33" width="16" height="0.8" fill="#ddd"/><rect x="49" y="35" width="16" height="0.8" fill="#ddd"/><rect x="8" y="46" width="25" height="0.8" fill="#777"/><rect x="8" y="48" width="69" height="0.6" fill="#999"/><rect x="8" y="50" width="32" height="14" stroke="#bbb" stroke-width="0.6" fill="none"/><rect x="8" y="66" width="32" height="23" stroke="#bbb" stroke-width="0.6" fill="none"/><rect x="10" y="55" width="20" height="2" fill="#555"/><rect x="10" y="58" width="10" height="0.8" fill="#888"/><rect x="42" y="51" width="35" height="0.8" fill="#aaa"/><rect x="42" y="53" width="35" height="0.8" fill="#aaa"/><rect x="42" y="56" width="35" height="0.8" fill="#aaa"/><rect x="42" y="59" width="35" height="0.8" fill="#aaa"/><rect x="42" y="62" width="35" height="0.8" fill="#aaa"/><rect x="10" y="70" width="28" height="0.8" fill="#ddd"/><rect x="10" y="73" width="28" height="0.8" fill="#ddd"/><rect x="10" y="76" width="28" height="0.8" fill="#ddd"/><rect x="10" y="80" width="28" height="0.8" fill="#ddd"/><rect x="10" y="83" width="28" height="0.8" fill="#ddd"/><rect x="10" y="92" width="67" height="0.8" fill="#ccc"/><rect x="25" y="98" width="30" height="0.8" fill="#888"/><rect x="20" y="101" width="25" height="0.8" fill="#aaa"/><rect x="48" y="101" width="12" height="0.8" fill="#aaa"/><rect x="20" y="103" width="25" height="0.8" fill="#aaa"/><rect x="48" y="103" width="12" height="0.8" fill="#aaa"/><rect x="20" y="105" width="25" height="0.8" fill="#aaa"/><rect x="48" y="105" width="12" height="0.8" fill="#aaa"/><rect x="20" y="108" width="45" height="0.8" fill="#bbb"/><rect x="5" y="114" width="4" height="0.8" fill="#aaa"/></g></svg>
<div style="position:absolute;left:369px;top:592px;width:1008px;height:209px;background:#fff;border-radius:12px;box-shadow:0 1px 6px rgba(0,0,0,0.13);"></div>
<div class="t" id="t60" style="left:385px;top:616px;font-size:17px;line-height:17px;color:#333333;font-weight:400;letter-spacing:-1.000px;-webkit-text-stroke:0.3px #333;">GESTION COMPTABLE</div>
<svg style="position:absolute;left:1343px;top:616px;" width="14.5" height="10" viewBox="0 0 14.5 10" fill="none"><path d="M1,8 L7.25,2 L13.5,8" stroke="#000064" stroke-width="1.3"/></svg>
<svg style="position:absolute;left:380px;top:646px;" width="35" height="35" viewBox="0 0 35 35" fill="none"><g stroke="#000064" stroke-width="1.7" stroke-linejoin="miter"><path d="M17.2,6.6 L28.6,26.3 H5.7 Z"/><path d="M17.2,12.2 V20.4"/></g><circle cx="17.2" cy="23.3" r="0.9" fill="#000064"/></svg>
<div class="t" id="t61" style="left:425px;top:656px;font-size:15px;line-height:15px;color:#000064;font-weight:400;letter-spacing:-0.333px;">Facture(s) à compléter</div>
<div class="t" id="t62" style="left:797px;width:60px;text-align:right;top:655px;font-size:17px;line-height:17px;color:#0e8a6c;font-weight:700;">14</div>
<svg style="position:absolute;left:380px;top:682px;" width="35" height="35" viewBox="0 0 35 35" fill="none"><g stroke="#a9a9a9" stroke-width="1.5" stroke-linejoin="round">
<path d="M10.2,5.8 H22.6 C23.3,5.8 23.8,6.3 23.8,7 V22.4 H10.2 C9.4,22.4 8.8,23.2 8.8,24 V7.2 C8.8,6.4 9.4,5.8 10.2,5.8 Z"/>
<path d="M8.8,24 V27.4 C8.8,28.2 9.4,28.8 10.2,28.8 H26.9 V8.8"/><path d="M11.2,25.7 H24.6"/></g></svg>
<div class="t" id="t63" style="left:425px;top:692px;font-size:15px;line-height:15px;color:#a9a9a9;font-weight:400;letter-spacing:-0.261px;">Facture(s) exportable(s)</div>
<div class="t" id="t64" style="left:797px;width:60px;text-align:right;top:691px;font-size:17px;line-height:17px;color:#a9a9a9;font-weight:700;">0</div>
<svg style="position:absolute;left:380px;top:718px;" width="35" height="35" viewBox="0 0 35 35" fill="none"><g stroke="#000064" stroke-width="1.6">
<ellipse cx="17" cy="14.6" rx="11.3" ry="6.4"/><path d="M5.7,14.6 V19.8 C5.7,23.6 10.8,26.6 17,26.6 C23.2,26.6 28.3,23.6 28.3,19.8 V14.6"/>
<path d="M20.4,11.3 C19.7,10.7 18.9,10.4 18,10.4 C15.8,10.4 14.2,12.3 14.2,14.6 C14.2,16.9 15.8,18.8 18,18.8 C18.9,18.8 19.7,18.5 20.4,17.9 M12.6,13.6 H18.2 M12.6,15.6 H18.2" stroke-width="1.5"/></g></svg>
<div class="t" id="t65" style="left:425px;top:728px;font-size:15px;line-height:15px;color:#000064;font-weight:400;letter-spacing:-0.321px;">Facture(s) à payer (-7 jours)</div>
<div class="t" id="t66" style="left:797px;width:60px;text-align:right;top:727px;font-size:17px;line-height:17px;color:#0e8a6c;font-weight:700;">12</div>
<div style="position:absolute;left:1387px;top:592px;width:499px;height:209px;background:#dccaf0;border-radius:12px;box-shadow:0 1px 6px rgba(0,0,0,0.13);"></div>
<div class="t" id="t67" style="left:1403px;top:616px;font-size:17px;line-height:17px;color:#333333;font-weight:400;letter-spacing:-0.867px;-webkit-text-stroke:0.3px #333;">LE SAVIEZ-VOUS ?</div>
<svg style="position:absolute;left:1851px;top:616px;" width="14.5" height="10" viewBox="0 0 14.5 10" fill="none"><path d="M1,8 L7.25,2 L13.5,8" stroke="#000064" stroke-width="1.3"/></svg>
<div class="t" id="t68" style="left:1403px;top:655px;font-size:16px;line-height:16px;color:#000064;font-weight:700;letter-spacing:-0.486px;">Indexation des notes de frais par IA</div>
<div style="position:absolute;left:1403px;top:674px;width:467px;height:1px;background:#cbb8e0;"></div>
<div class="t" id="t69" style="left:1403px;top:686px;font-size:14px;line-height:14px;color:#141414;font-weight:400;letter-spacing:0.227px;"><span style="color:#e8141d">Nouveauté : </span>Zeendoc intègre son propre modèle IA, capable d'indexer</div>
<div class="t" id="t70" style="left:1403px;top:706px;font-size:14px;line-height:14px;color:#141414;font-weight:400;letter-spacing:0.254px;">automatiquement sur une note de frais les 5 champs principaux : date</div>
<div class="t" id="t71" style="left:1403px;top:726px;font-size:14px;line-height:14px;color:#141414;font-weight:400;letter-spacing:0.328px;">du document, fournisseur, montant HT, montant TTC et montant TVA.</div>
</body></html>
